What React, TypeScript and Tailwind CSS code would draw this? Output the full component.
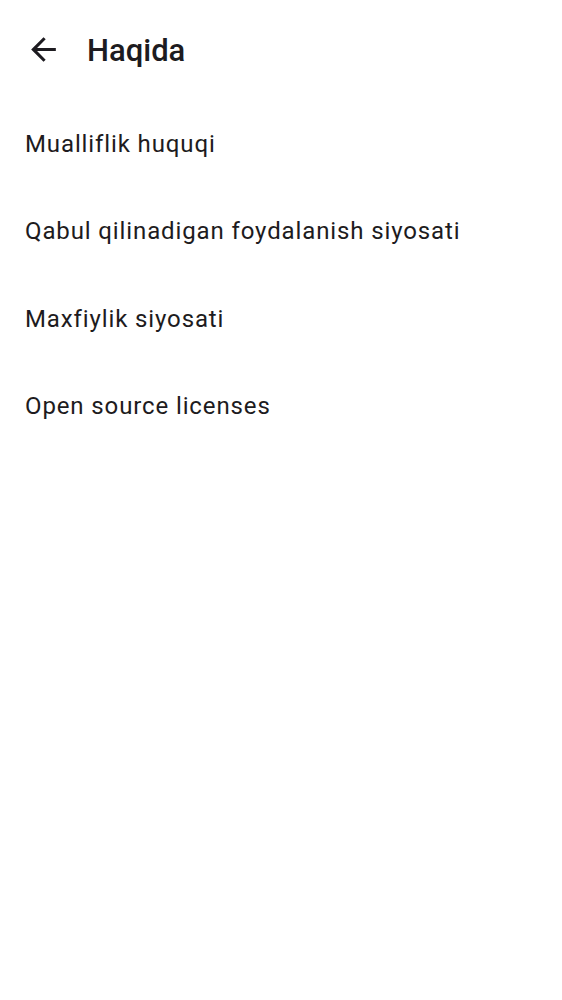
import React from "react";

export default function App() {
  const items = [
    "Mualliflik huquqi",
    "Qabul qilinadigan foydalanish siyosati",
    "Maxfiylik siyosati",
    "Open source licenses",
  ];
  return (
    <div className="w-[562px] h-[1000px] bg-white text-[#1d1b20]" style={{ fontFamily: "Roboto, 'Noto Sans', sans-serif" }}>
      <div className="flex items-center h-[100px] pl-[25px]">
        <svg width="37" height="37" viewBox="0 0 24 24" className="shrink-0 mt-[-1px]" fill="#1d1b20">
          <path d="M20 11H7.83l5.59-5.59L12 4l-8 8 8 8 1.41-1.41L7.83 13H20v-2z" />
        </svg>
        <div className="ml-[25px] text-[31px] font-medium leading-none">Haqida</div>
      </div>
      <div className="flex flex-col">
        {items.map((t) => (
          <div key={t} className="h-[87.5px] flex items-center pl-[25px] text-[24px] tracking-[0.88px] leading-none">
            {t}
          </div>
        ))}
      </div>
    </div>
  );
}
